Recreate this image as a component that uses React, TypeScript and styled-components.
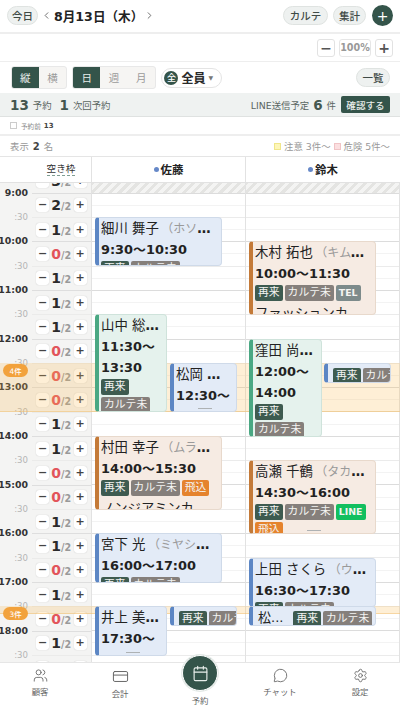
import React from "react";
import styled, { createGlobalStyle } from "styled-components";
import { Users, CreditCard, Calendar, MessageCircle, Settings, ChevronLeft, ChevronRight } from "lucide-react";

const Global = createGlobalStyle`
  html, body { margin: 0; padding: 0; background: #fff; }
  * { box-sizing: border-box; }
  body { font-family: "DejaVu Sans", "Noto Sans CJK JP", sans-serif; color: #222; }
`;

const GREEN = "#34544a";
const HOUR = 48.67;

const Page = styled.div`
  width: 400px; height: 714px; overflow: hidden; display: flex; flex-direction: column; position: relative; background: #fff;
`;
const TopBar = styled.header`
  height: 34px; flex: none; display: flex; align-items: center; padding: 0 7px 1px 7px; border-bottom: 2px solid #eeeeee;
`;
const Pill = styled.button<{ $h?: number; $w: number; $ml?: number }>`
  height: ${(p) => p.$h ?? 19}px; width: ${(p) => p.$w}px; margin-left: ${(p) => p.$ml ?? 0}px; flex: none; padding: 0; border: 1px solid #dfe3e1; border-radius: 10px; background: #eef1f0;
  color: #3f4a46; font: 500 10.5px "DejaVu Sans", "Noto Sans CJK JP", sans-serif; display: flex; align-items: center; justify-content: center;
`;
const NavArrow = styled.span`
  width: 16px; display: flex; justify-content: center; color: #666; flex: none;
`;
const DateTitle = styled.div`
  font-size: 12.6px; font-weight: 700; white-space: nowrap; width: 87px; flex: none; color: #222;
`;
const Spacer = styled.div` flex: 1; `;
const RoundAdd = styled.button`
  width: 21px; height: 21px; border-radius: 50%; border: 0; padding: 0; background: ${GREEN}; color: #fff; font: 400 14px "DejaVu Sans", sans-serif; margin-left: 6px; flex: none;
`;
const ZoomBar = styled.div`
  height: 28px; flex: none; display: flex; align-items: center; justify-content: flex-end; gap: 4px; padding: 0 7px 0 0; border-bottom: 1px solid #eeeeee;
`;
const ZoomBtn = styled.button`
  width: 18px; height: 18px; padding: 0; background: #fff; border: 1px solid #e2e2e2; border-radius: 3px; color: #555; font: 700 14px/1 "DejaVu Sans", sans-serif;
`;
const ZoomVal = styled.div`
  width: 32px; height: 18px; border: 1px solid #e6e6e6; border-radius: 3px; color: #999; font-size: 9.6px; font-weight: 700; display: flex; align-items: center; justify-content: center;
`;
const ViewBar = styled.div`
  height: 31px; flex: none; display: flex; align-items: center; padding: 0 10px 0 10.5px;
`;
const Segment = styled.div<{ $mr: number }>`
  display: flex; height: 23px; border: 1px solid #e8e8e8; border-radius: 3px; background: #f6f5f3; overflow: hidden; margin-right: ${(p) => p.$mr}px; flex: none;
`;
const SegItem = styled.div<{ $on?: boolean }>`
  width: 27.3px; display: flex; align-items: center; justify-content: center; font-size: 10.5px; background: ${(p) => (p.$on ? GREEN : "transparent")}; color: ${(p) => (p.$on ? "#e8eeeb" : "#9a9a9a")};
`;
const StaffSelect = styled.div`
  height: 20px; width: 61px; border: 1px solid #e4e4e4; border-radius: 10px; display: flex; align-items: center; padding-left: 2.5px; gap: 3px; font-size: 12px; font-weight: 700; color: #2a2a2a; white-space: nowrap;
`;
const AllMark = styled.span`
  width: 14px; height: 14px; border-radius: 50%; background: ${GREEN}; color: #fff; font-size: 9px; font-weight: 500; display: flex; align-items: center; justify-content: center; flex: none;
`;
const Caret = styled.span` font-size: 6px; color: #777; font-weight: 400; `;
const StatsBar = styled.div`
  height: 24px; flex: none; background: #eff2f1; border-bottom: 1px solid #dfe2e1; display: flex; align-items: center; padding: 0 10px; color: #5a6662; font-size: 9.4px;
`;
const BigNum = styled.b<{ $ml: number; $mr: number }>`
  font-size: 13.5px; color: #44574f; margin: 0 ${(p) => p.$mr}px 0 ${(p) => p.$ml}px;
`;
const ConfirmBtn = styled.button`
  width: 49px; height: 17px; padding: 0; border: 0; border-radius: 2px; background: ${GREEN}; color: #e8eeeb; font: 500 9.6px "DejaVu Sans", "Noto Sans CJK JP", sans-serif; margin-left: 5px;
`;
const PreBar = styled.div`
  height: 19px; flex: none; display: flex; align-items: center; padding: 0 10px; gap: 3px; border-bottom: 2px solid #eeeeee; font-size: 6.6px; color: #888;
`;
const Check = styled.span`
  width: 7px; height: 7px; border: 1px solid #ccc; margin-right: 1px; flex: none;
`;
const PreNum = styled.b` color: #444; font-size: 7px; `;
const InfoBar = styled.div`
  height: 21px; flex: none; display: flex; align-items: center; padding: 0 10px; font-size: 9.4px; color: #999; border-bottom: 1px solid #e5e5e5; white-space: nowrap;
`;
const InfoNum = styled.b` color: #444; font-size: 10px; margin: 0 4px; `;
const Legend = styled.span<{ $c: string; $b: string; $ml?: number }>`
  width: 7px; height: 7px; background: ${(p) => p.$c}; border: 1px solid ${(p) => p.$b}; margin: 0 3px 0 ${(p) => p.$ml ?? 0}px; flex: none;
`;
const HeadRow = styled.div`
  height: 26px; flex: none; display: flex; border-bottom: 1px solid #e2e2e2; padding-bottom: 1px;
`;
const HeadCap = styled.div`
  width: 92px; flex: none; border-right: 1px solid #e2e2e2; display: flex; align-items: center; justify-content: center; padding-left: 31px; font-size: 9.6px; color: #333; margin-bottom: -1px;
`;
const Dashed = styled.span` border-bottom: 1px dashed #7f9d92; line-height: 12px; `;
const HeadStaff = styled.div`
  flex: 1; font-size: 11.4px; font-weight: 700; display: flex; align-items: center; justify-content: center; gap: 2px; color: #222;
`;
const HeadStaffA = styled(HeadStaff)` width: 154px; flex: none; border-right: 1px solid #e2e2e2; margin-bottom: -1px; padding-bottom: 1px; `;
const Dot = styled.i`
  width: 5px; height: 5px; border-radius: 50%; background: #6688c8; display: block;
`;
const Viewport = styled.div`
  flex: 1; min-height: 0; overflow: hidden;
`;
const Board = styled.div`
  margin-top: -14.67px; display: flex; position: relative;
`;
const TimeCol = styled.div`
  width: 32px; flex: none; background: #f4f4f3;
`;
const TimeCell = styled.div`
  height: ${HOUR / 2}px; display: flex; justify-content: flex-end; padding-right: 4px;
`;
const TimeText = styled.span<{ $hour: boolean }>`
  display: block; transform: translateY(-50%); height: 12px; line-height: 12px; white-space: nowrap; background: #f4f4f3;
  font-size: ${(p) => (p.$hour ? 9.4 : 8.6)}px; font-weight: ${(p) => (p.$hour ? 700 : 400)}; color: ${(p) => (p.$hour ? "#333" : "#b5b5b5")};
`;
const CapCol = styled.div`
  width: 60px; flex: none; background: #f4f4f3; border-right: 1px solid #e2e2e2;
`;
const CapCell = styled.div<{ $hour: boolean }>`
  height: ${HOUR / 2}px; display: flex; align-items: center; padding: 0 4.5px 0 4px; border-top: 1px solid ${(p) => (p.$hour ? "#dedede" : "#ebebea")};
`;
const Step = styled.button`
  width: 13px; height: 14px; padding: 0; flex: none; border: 0; background: #fff; border-radius: 3px; box-shadow: 0 0 1px rgba(0,0,0,.25); color: #444; font: 700 11px/14px "DejaVu Sans", sans-serif;
`;
const CapVal = styled.div`
  flex: 1; display: flex; align-items: baseline; justify-content: center; white-space: nowrap;
`;
const CapNum = styled.b<{ $zero: boolean }>`
  font-size: 14px; color: ${(p) => (p.$zero ? "#e2545a" : "#2b2b2b")};
`;
const CapMax = styled.span` font-size: 9.6px; color: #999; font-weight: 700; `;
const StaffCol = styled.div<{ $w: number }>`
  width: ${(p) => p.$w}px; flex: none; position: relative; border-right: 1px solid #e2e2e2;
  &:last-child { border-right: 0; }
`;
const Slot = styled.div<{ $kind: "hour" | "half" | "quarter"; $hatch?: boolean }>`
  height: ${HOUR / 4}px;
  border-top: 1px solid ${(p) => (p.$kind === "hour" ? "#dcdcdc" : p.$kind === "half" ? "#ebebeb" : "#f3f3f3")};
  ${(p) => p.$hatch && "background: repeating-linear-gradient(135deg, #e4e4e2 0 3px, #f4f4f3 3px 6.5px); border-top: 0;"}
`;
const Band = styled.div`
  position: absolute; left: 0; right: 0; z-index: 1; background: rgba(250, 190, 85, .24); border-bottom: 1px solid rgba(240, 190, 110, .5); pointer-events: none;
`;
const CountBadge = styled.span`
  position: absolute; left: 3px; z-index: 3; width: 25px; height: 12.5px; border-radius: 7px; background: #f2a23c; color: #fff; font-size: 7.4px; font-weight: 500; display: flex; align-items: center; justify-content: center;
`;
const palette = {
  blue: { bar: "#5c86c4", bg: "#e3ebf7", line: "#cfdae9" },
  green: { bar: "#4aa883", bg: "#e5f2ed", line: "#cfe3db" },
  orange: { bar: "#c47a38", bg: "#f6ebe3", line: "#e8d9cc" },
};
type Tone = keyof typeof palette;
const Card = styled.div<{ $tone: Tone }>`
  position: absolute; z-index: 2; overflow: hidden; border-radius: 4px; padding: 1px 6px 0 2px;
  background: ${(p) => palette[p.$tone].bg}; border: 1px solid ${(p) => palette[p.$tone].line}; border-left: 4px solid ${(p) => palette[p.$tone].bar};
`;
const NameLine = styled.div`
  font-size: 13.4px; line-height: 20px; white-space: nowrap; overflow: hidden; text-overflow: ellipsis; color: #222; font-weight: 700;
`;
const NameText = styled.span` font-weight: 400; `;
const Kana = styled.span` color: #9a9a9a; font-size: 12px; font-weight: 400; margin-left: 2.5px; `;
const TimeLine = styled.div`
  font-size: 12.9px; line-height: 21px; font-weight: 700; color: #222;
`;
const Tags = styled.div`
  display: flex; flex-wrap: wrap; gap: 2px; line-height: 0; margin-top: 1px; margin-right: -4px;
`;
const Tag = styled.span<{ $bg: string; $bold?: boolean }>`
  height: 16px; padding: 0 3px; border-radius: 2px; background: ${(p) => p.$bg}; color: #f4f4f2; font-size: ${(p) => (p.$bold ? 9.4 : 10.8)}px; font-weight: ${(p) => (p.$bold ? 700 : 400)}; line-height: 16px; white-space: nowrap; flex: none;
`;
const Memo = styled.div`
  font-size: 13.3px; line-height: 21px; margin-top: 2px; white-space: nowrap; overflow: hidden; text-overflow: ellipsis; color: #222;
`;
const Handle = styled.i`
  position: absolute; left: 50%; bottom: 2px; width: 14px; margin-left: -7px; height: 1px; background: #aeb2b4; display: block;
`;
const MiniRow = styled.div`
  display: flex; align-items: flex-start; justify-content: space-between; gap: 10px; padding: 3px 0 0 3px; margin-right: -3px;
`;
const MiniName = styled.span` font-size: 13px; line-height: 14px; color: #222; white-space: nowrap; `;
const MiniTags = styled.div` display: flex; gap: 2px; flex: none; `;
const NavBar = styled.nav`
  height: 52px; flex: none; display: flex; background: #fff; border-top: 1px solid #e6e6e6; position: relative; z-index: 4;
`;
const NavItem = styled.div`
  width: 80px; display: flex; flex-direction: column; align-items: center; padding-top: 5px; gap: 2px; color: #666; font-size: 8.4px;
`;
const NavCenter = styled(NavItem)`
  padding-top: 0; gap: 0;
`;
const Fab = styled.div`
  width: 36px; height: 36px; margin-top: -8px; border-radius: 50%; background: ${GREEN}; border: 1px solid #fff; box-shadow: 0 0 0 1px #e4eae7; color: #e8eeeb; display: flex; align-items: center; justify-content: center; margin-bottom: 3px;
`;

type Ev = {
  start: number; mins: number; left: number; width: number; tone: Tone; name?: string; kana?: string; time?: string;
  tags?: string[]; memo?: string; handle?: boolean; mini?: boolean;
};
const tagColor: Record<string, string> = { 再来: "#3e5b50", カルテ未: "#857f7b", 飛込: "#e5832d", TEL: "#7d8b8b", LINE: "#12bf5f" };
const T = (h: number, m = 0) => h * 60 + m;
const colA: Ev[] = [
  { start: T(9, 30), mins: 60, left: 3, width: 127, tone: "blue", name: "細川 舞子", kana: "（ホソカワ マイコ）", time: "9:30〜10:30", tags: ["再来", "カルテ未"] },
  { start: T(11, 30), mins: 120, left: 3, width: 72, tone: "green", name: "山中 総一郎", time: "11:30〜13:30", tags: ["再来", "カルテ未"] },
  { start: T(12, 30), mins: 60, left: 78, width: 67, tone: "blue", name: "松岡 真理子", time: "12:30〜13:30", tags: ["再来"], handle: true },
  { start: T(14, 0), mins: 90, left: 3, width: 127, tone: "orange", name: "村田 幸子", kana: "（ムラタ サチコ）", time: "14:00〜15:30", tags: ["再来", "カルテ未", "飛込"], memo: "ノンジアミンカラー・トリートメント" },
  { start: T(16, 0), mins: 60, left: 3, width: 127, tone: "blue", name: "宮下 光", kana: "（ミヤシタ ヒカル）", time: "16:00〜17:00", tags: ["再来", "カルテ未"] },
  { start: T(17, 30), mins: 60, left: 3, width: 72, tone: "blue", name: "井上 美咲子", time: "17:30〜18:30", tags: ["再来"], handle: true },
  { start: T(17, 30), mins: 23.5, left: 78, width: 67, tone: "blue", tags: ["再来", "カルテ未"], mini: true },
];
const colB: Ev[] = [
  { start: T(10, 0), mins: 90, left: 3, width: 127, tone: "orange", name: "木村 拓也", kana: "（キムラ タクヤ）", time: "10:00〜11:30", tags: ["再来", "カルテ未", "TEL"], memo: "ファッションカラー・トリートメント" },
  { start: T(12, 0), mins: 120, left: 3, width: 73, tone: "green", name: "窪田 尚美子", time: "12:00〜14:00", tags: ["再来", "カルテ未"] },
  { start: T(12, 30), mins: 23.5, left: 78, width: 67, tone: "blue", tags: ["再来", "カルテ未"], mini: true },
  { start: T(14, 30), mins: 90, left: 3, width: 127, tone: "orange", name: "高瀬 千鶴", kana: "（タカセ チヅル）", time: "14:30〜16:00", tags: ["再来", "カルテ未", "LINE", "飛込"], handle: true },
  { start: T(16, 30), mins: 60, left: 3, width: 127, tone: "blue", name: "上田 さくら", kana: "（ウエダ サクラ）", time: "16:30〜17:30", tags: ["再来", "カルテ未"] },
  { start: T(17, 30), mins: 23.5, left: 3, width: 127, tone: "blue", name: "松...", tags: ["再来", "カルテ未"], mini: true },
];

const START = T(8, 30);
const px = (min: number) => ((min - START) * HOUR) / 60;
const counts = [3, 2, 1, 0, 1, 1, 1, 0, 0, 0, 1, 1, 0, 0, 1, 1, 0, 1, 0, 1, 2];
const cells = counts.map((c, i) => {
  const m = START + i * 30;
  return { m, c, hour: m % 60 === 0, label: m % 60 === 0 ? `${m / 60}:00` : ":30" };
});
const quarters = Array.from({ length: 84 }, (_, i) => i);

const EventCard = ({ e }: { e: Ev }) => (
  <Card $tone={e.tone} style={{ top: px(e.start), height: (e.mins * HOUR) / 60 + 0.5, left: e.left, width: e.width }}>
    {e.mini ? (
      <MiniRow>
        {e.name && <MiniName>{e.name}</MiniName>}
        <MiniTags>{e.tags?.map((t) => <Tag key={t} $bg={tagColor[t]}>{t}</Tag>)}</MiniTags>
      </MiniRow>
    ) : (
      <>
        <NameLine><NameText>{e.name}</NameText>{e.kana && <Kana>{e.kana}</Kana>}</NameLine>
        <TimeLine>{e.time}</TimeLine>
        <Tags>{e.tags?.map((t) => <Tag key={t} $bg={tagColor[t]} $bold={t === "TEL" || t === "LINE"}>{t}</Tag>)}</Tags>
        {e.memo && <Memo>{e.memo}</Memo>}
      </>
    )}
    {e.handle && <Handle />}
  </Card>
);

const StaffColumn = ({ w, events }: { w: number; events: Ev[] }) => (
  <StaffCol $w={w}>
    {quarters.map((q) => (
      <Slot key={q} $hatch={q < 2} $kind={q % 4 === 2 ? "hour" : q % 4 === 0 ? "half" : "quarter"} />
    ))}
    {events.map((e, i) => <EventCard key={i} e={e} />)}
  </StaffCol>
);

export default function App() {
  return (
    <Page>
      <Global />
      <TopBar>
        <Pill $w={31} $h={19}>今日</Pill>
        <NavArrow><ChevronLeft size={11} /></NavArrow>
        <DateTitle>8月13日（木）</DateTitle>
        <NavArrow><ChevronRight size={11} /></NavArrow>
        <Spacer />
        <Pill $w={45}>カルテ</Pill>
        <Pill $w={33} $ml={5}>集計</Pill>
        <RoundAdd>+</RoundAdd>
      </TopBar>
      <ZoomBar>
        <ZoomBtn>−</ZoomBtn>
        <ZoomVal>100%</ZoomVal>
        <ZoomBtn>+</ZoomBtn>
      </ZoomBar>
      <ViewBar>
        <Segment $mr={5}><SegItem $on>縦</SegItem><SegItem>横</SegItem></Segment>
        <Segment $mr={5}><SegItem $on>日</SegItem><SegItem>週</SegItem><SegItem>月</SegItem></Segment>
        <StaffSelect><AllMark>全</AllMark>全員<Caret>▼</Caret></StaffSelect>
        <Spacer />
        <Pill $w={34} $h={19}>一覧</Pill>
      </ViewBar>
      <StatsBar>
        <BigNum $ml={0} $mr={4}>13</BigNum>予約
        <BigNum $ml={8} $mr={4}>1</BigNum>次回予約
        <Spacer />
        LINE送信予定
        <BigNum $ml={4} $mr={4}>6</BigNum>件
        <ConfirmBtn>確認する</ConfirmBtn>
      </StatsBar>
      <PreBar><Check />予約前 <PreNum>13</PreNum></PreBar>
      <InfoBar>
        表示<InfoNum>2</InfoNum>名
        <Spacer />
        <Legend $c="#fdf6b8" $b="#f0e68a" />注意 3件〜
        <Legend $c="#fbdfe0" $b="#f0c4c6" $ml={3} />危険 5件〜
      </InfoBar>
      <HeadRow>
        <HeadCap><Dashed>空き枠</Dashed></HeadCap>
        <HeadStaffA><Dot />佐藤</HeadStaffA>
        <HeadStaff><Dot />鈴木</HeadStaff>
      </HeadRow>
      <Viewport>
        <Board>
          <TimeCol>
            {cells.map((c) => (
              <TimeCell key={c.m}><TimeText $hour={c.hour}>{c.label}</TimeText></TimeCell>
            ))}
          </TimeCol>
          <CapCol>
            {cells.map((c) => (
              <CapCell key={c.m} $hour={c.hour}>
                <Step>−</Step>
                <CapVal><CapNum $zero={c.c === 0}>{c.c}</CapNum><CapMax>/2</CapMax></CapVal>
                <Step>+</Step>
              </CapCell>
            ))}
          </CapCol>
          <StaffColumn w={154} events={colA} />
          <StaffColumn w={154} events={colB} />
          <Band style={{ top: px(T(12, 30)), height: HOUR }} />
          <Band style={{ top: px(T(17, 30)), height: 8 }} />
          <CountBadge style={{ top: px(T(12, 30)) + 1 }}>4件</CountBadge>
          <CountBadge style={{ top: px(T(17, 30)) + 1 }}>3件</CountBadge>
        </Board>
      </Viewport>
      <NavBar>
        <NavItem><Users size={15} strokeWidth={1.4} />顧客</NavItem>
        <NavItem><CreditCard size={17} strokeWidth={1.4} />会計</NavItem>
        <NavCenter><Fab><Calendar size={17} strokeWidth={1.6} /></Fab>予約</NavCenter>
        <NavItem><MessageCircle size={15} strokeWidth={1.4} />チャット</NavItem>
        <NavItem><Settings size={15} strokeWidth={1.4} />設定</NavItem>
      </NavBar>
    </Page>
  );
}
